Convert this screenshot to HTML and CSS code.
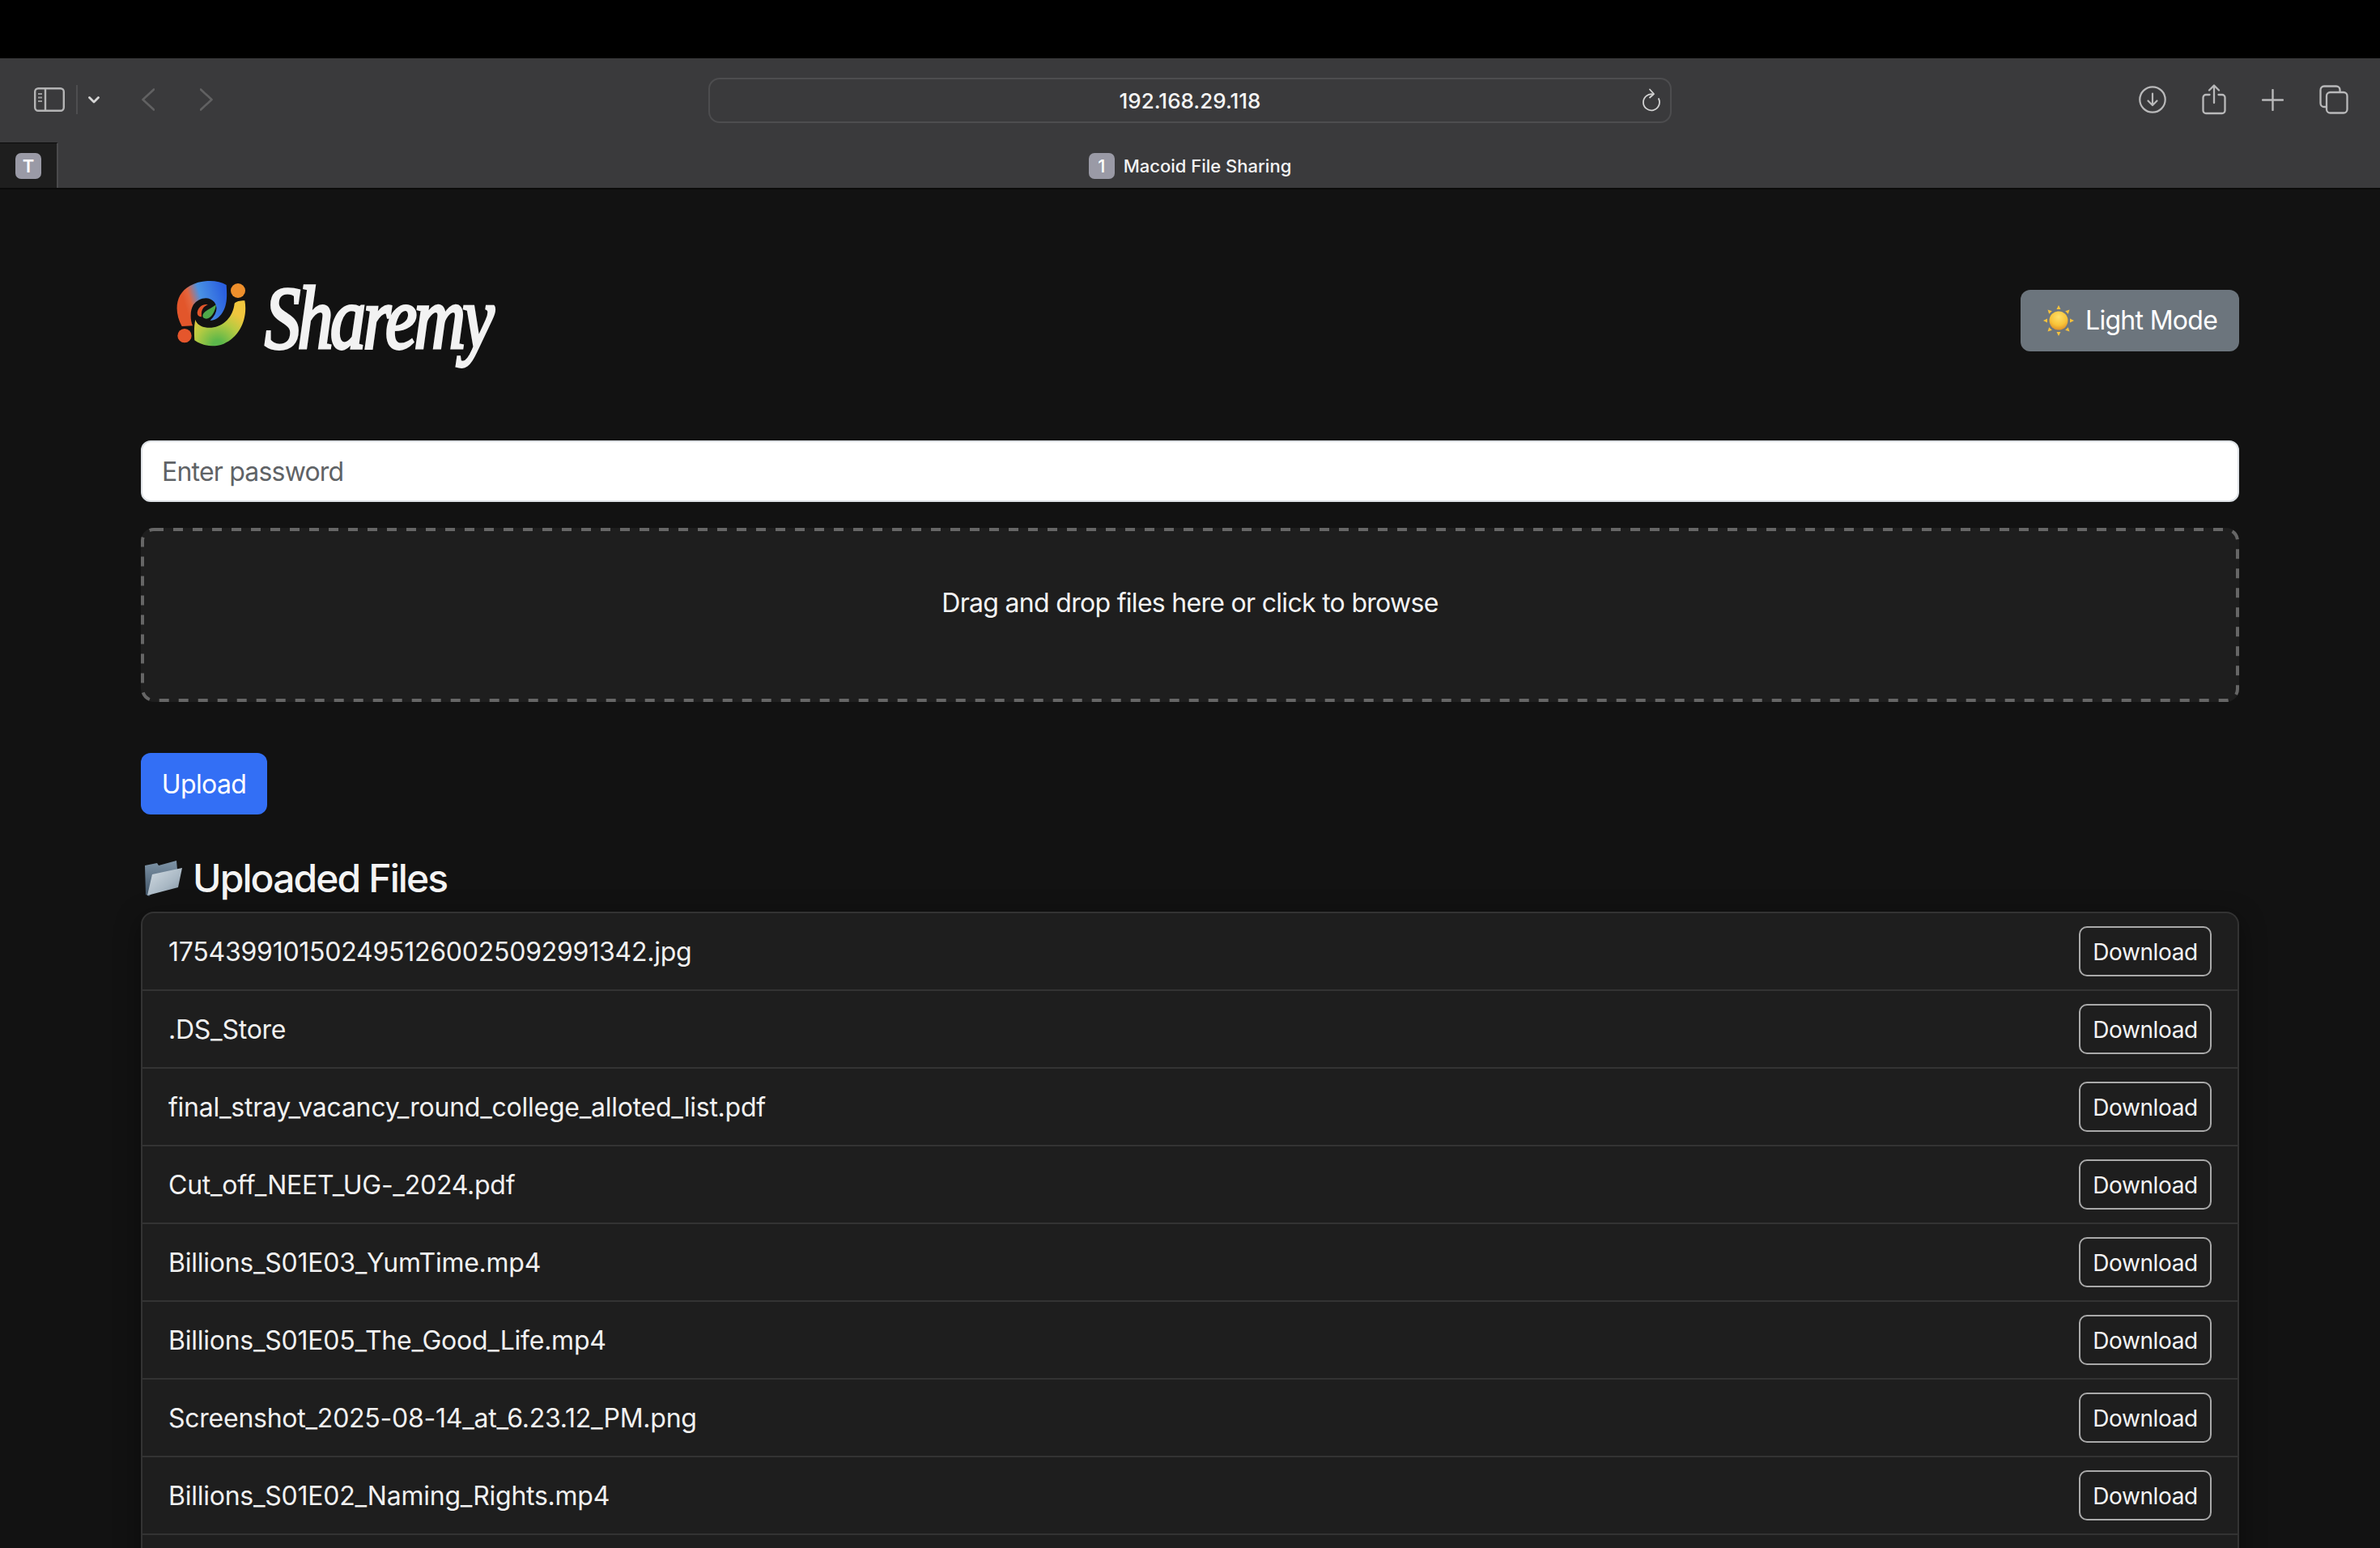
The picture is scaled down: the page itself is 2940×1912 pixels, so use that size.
FILE: index.html
```html
<!DOCTYPE html>
<html lang="en">
<head>
<meta charset="utf-8">
<title>Macoid File Sharing</title>
<link rel="stylesheet" href="styles.css">
</head>
<body>
<div class="notch-bar"></div>
<header class="browser">
  <div class="toolbar">
    <div class="tools tools-left">
      <svg class="ic-sidebar" width="38" height="30" viewBox="0 0 38 30" fill="none" stroke="#b4b4b5" stroke-width="2.4"><rect x="1.2" y="1.2" width="35.6" height="27.6" rx="4"/><path d="M14 1v28"/><path d="M5 8h5M5 12.500h5M5 17h5" stroke-width="2" stroke="#9a9a9b"/></svg>
      <span class="tool-sep"></span>
      <svg class="ic-chevron" width="14" height="9" viewBox="0 0 14 9" fill="none" stroke="#d6d6d6" stroke-width="2.800" stroke-linecap="round" stroke-linejoin="round"><path d="M1.500 1.500 7 7l5.500-5.500"/></svg>
      <svg class="ic-back" width="16" height="28" viewBox="0 0 16 28" fill="none" stroke="#616162" stroke-width="2.600" stroke-linecap="round" stroke-linejoin="round"><path d="M15 1.500 1.500 14 15 26.500"/></svg>
      <svg class="ic-forward" width="16" height="28" viewBox="0 0 16 28" fill="none" stroke="#616162" stroke-width="2.600" stroke-linecap="round" stroke-linejoin="round"><path d="M1 1.500 14.500 14 1 26.500"/></svg>
    </div>
    <div class="address">
      <span class="url">192.168.29.118</span>
      <svg class="ic-reload" width="22" height="30" viewBox="0 0 22 30" fill="none" stroke="#d2d2d2" stroke-width="1.800" stroke-linecap="round" stroke-linejoin="round"><path d="M13 7.500A10 10 0 1 0 20 13"/><path d="M9 1.500 14 7 9 11.500"/></svg>
    </div>
    <div class="tools tools-right">
      <svg width="34" height="34" viewBox="0 0 34 34" fill="none" stroke="#b9b9ba" stroke-width="2.200" stroke-linecap="round" stroke-linejoin="round"><circle cx="17" cy="17" r="15.700"/><path d="M17 9.500v14M11.500 18.500l5.500 5.500 5.500-5.500"/></svg>
      <svg width="30" height="38" viewBox="0 0 30 38" fill="none" stroke="#b9b9ba" stroke-width="2.300" stroke-linecap="round" stroke-linejoin="round"><path d="M9.500 13H5a3.500 3.500 0 0 0-3.500 3.500v16A3.500 3.500 0 0 0 5 36h20a3.500 3.500 0 0 0 3.500-3.500v-16A3.500 3.500 0 0 0 25 13h-4.500"/><path d="M15 23V2M9 7.500 15 1.500l6 6"/></svg>
      <svg width="27" height="27" viewBox="0 0 27 27" fill="none" stroke="#b9b9ba" stroke-width="2.400" stroke-linecap="round"><path d="M13.500 1v25M1 13.500h25"/></svg>
      <svg width="36" height="36" viewBox="0 0 36 36" fill="none" stroke="#b9b9ba" stroke-width="2.300"><path d="M8 27H6a4.500 4.500 0 0 1-4.500-4.500v-16A4.500 4.500 0 0 1 6 1.500h15A4.500 4.500 0 0 1 25.500 6v2"/><rect x="9" y="9" width="25.500" height="25.500" rx="4.500"/></svg>
    </div>
  </div>
  <div class="tabbar">
    <div class="pinned-tab"><span class="pinned-icon">T</span></div>
    <div class="active-tab"><span class="tab-badge">1</span><span class="tab-title">Macoid File Sharing</span></div>
  </div>
</header>
<main class="page">
  <div class="page-head">
    <div class="brand">
      <svg class="brand-mark" width="94" height="90" viewBox="100 70 282 270">
        <defs>
          <linearGradient id="gTop" gradientUnits="userSpaceOnUse" x1="130" y1="190" x2="300" y2="140">
            <stop offset="0.12" stop-color="#e2562b"/>
            <stop offset="0.25" stop-color="#e4663f"/>
            <stop offset="0.48" stop-color="#4a92e4"/>
            <stop offset="1" stop-color="#2a5fe0"/>
          </linearGradient>
          <radialGradient id="gBottom" gradientUnits="userSpaceOnUse" cx="268" cy="320" r="150">
            <stop offset="0.12" stop-color="#5cb74a"/>
            <stop offset="0.55" stop-color="#b5cb42"/>
            <stop offset="0.9" stop-color="#f0c63e"/>
          </radialGradient>
        </defs>
        <path fill="url(#gTop)" d="M135 250C105 195 110 130 165 100C205 78 265 75 300 97C302 130 305 170 285 200C272 220 255 230 240 228C265 205 270 180 255 160C235 135 195 145 178 170C165 190 165 225 175 248Z"/>
        <path fill="url(#gBottom)" d="M182 302C180 270 180 250 185 225C190 245 215 258 245 255C290 250 325 215 330 165C340 155 360 155 368 155C380 220 350 290 290 315C250 330 210 322 182 302Z"/>
        <path fill="#e2562b" d="M192 200C195 178 215 165 232 170C215 175 205 190 208 215C198 215 192 210 192 200Z"/>
        <path fill="#4fa84a" d="M212 212C212 195 235 190 262 170C258 195 245 222 225 222C218 222 212 218 212 212Z"/>
        <circle fill="#ee8f2c" cx="343" cy="118" r="27"/>
        <circle fill="#e5562c" cx="145" cy="285" r="26"/>
      </svg>
      <span class="wordmark">Sharemy</span>
    </div>
    <button class="btn-mode" type="button">
      <svg class="ic-sun" width="38" height="38" viewBox="0 0 38 38">
        <defs><radialGradient id="gSun" cx="50%" cy="30%" r="75%"><stop offset="0" stop-color="#ffe06a"/><stop offset="0.6" stop-color="#f8c338"/><stop offset="1" stop-color="#d9892a"/></radialGradient></defs>
        <g fill="#f7c23c"><path d="M19 0l2.500 5h-5z"/><path d="M19 38l-2.500-5h5z"/><path d="M0 19l5-2.500v5z"/><path d="M38 19l-5 2.500v-5z"/><path d="M5.500 5.500l5.300 1.700-3.600 3.600z"/><path d="M32.500 5.500l-1.700 5.300-3.600-3.600z"/><path d="M5.500 32.500l1.700-5.300 3.600 3.600z"/><path d="M32.500 32.500l-5.300-1.700 3.600-3.600z"/></g>
        <circle cx="19" cy="19" r="11.500" fill="url(#gSun)"/>
      </svg>
      <span>Light Mode</span>
    </button>
  </div>
  <input class="password" type="password" placeholder="Enter password">
  <div class="dropzone">
    <svg class="dash-frame" aria-hidden="true"><rect class="dash-rect" x="2" y="2" rx="14" ry="14"/></svg>
    <p class="drop-text">Drag and drop files here or click to browse</p>
  </div>
  <button class="btn-upload" type="button">Upload</button>
  <h2 class="files-title">
    <svg class="ic-folder" width="48" height="44" viewBox="0 0 48 44">
      <defs>
        <linearGradient id="gBack" x1="0" y1="0" x2="0" y2="1"><stop offset="0" stop-color="#7f95a8"/><stop offset="1" stop-color="#3f5366"/></linearGradient>
        <linearGradient id="gFront" x1="0" y1="0" x2="1" y2="1"><stop offset="0" stop-color="#d4dde4"/><stop offset="0.6" stop-color="#a9b8c4"/><stop offset="1" stop-color="#7e8f9e"/></linearGradient>
      </defs>
      <path fill="url(#gBack)" d="M1 6l15-3 2 3 22-6 1 11L6 44 2 42z"/>
      <path fill="url(#gFront)" d="M10 17L47 9 42 33 4 43z"/>
    </svg>
    <span>Uploaded Files</span>
  </h2>
  <ul class="file-list">
    <li class="file-row"><span class="file-name">17543991015024951260025092991342.jpg</span><a class="btn-download">Download</a></li>
    <li class="file-row"><span class="file-name">.DS_Store</span><a class="btn-download">Download</a></li>
    <li class="file-row"><span class="file-name">final_stray_vacancy_round_college_alloted_list.pdf</span><a class="btn-download">Download</a></li>
    <li class="file-row"><span class="file-name">Cut_off_NEET_UG-_2024.pdf</span><a class="btn-download">Download</a></li>
    <li class="file-row"><span class="file-name">Billions_S01E03_YumTime.mp4</span><a class="btn-download">Download</a></li>
    <li class="file-row"><span class="file-name">Billions_S01E05_The_Good_Life.mp4</span><a class="btn-download">Download</a></li>
    <li class="file-row"><span class="file-name">Screenshot_2025-08-14_at_6.23.12_PM.png</span><a class="btn-download">Download</a></li>
    <li class="file-row"><span class="file-name">Billions_S01E02_Naming_Rights.mp4</span><a class="btn-download">Download</a></li>
    <li class="file-row"></li>
  </ul>
</main>
</body>
</html>
```
FILE: styles.css
```css
* { box-sizing: border-box; }
html, body { margin: 0; height: 100%; overflow: hidden; }
body { background: #121212; color: #f1f1f1; font-family: Inter, "Liberation Sans", sans-serif; font-size: 32px; line-height: 48px; }

.notch-bar { height: 72px; background: #000; }
.browser { height: 162px; background: #3a3a3c; border-bottom: 2px solid #0b0b0b; display: flex; flex-direction: column; }
.toolbar { height: 104px; display: grid; grid-template-columns: 875px 1190px 1fr; align-items: center; }
.tools { display: flex; align-items: center; margin-top: -2px; }
.tools-left { padding-left: 42px; }
.tool-sep { width: 2px; height: 36px; background: #4e4e50; margin-left: 14px; }
.ic-chevron { margin-left: 13px; }
.ic-back { margin-left: 52px; }
.ic-forward { margin-left: 56px; }
.tools-right { justify-content: flex-end; padding-right: 39px; gap: 44px; }
.address { height: 56px; border: 2px solid #4d4d4f; border-radius: 14px; display: flex; align-items: center; justify-content: center; position: relative; }
.url { font-size: 26px; font-weight: 500; color: #f4f4f4; line-height: 30px; padding-top: 1px; }
.ic-reload { position: absolute; right: 12px; top: 11px; }
.tabbar { height: 56px; position: relative; display: flex; justify-content: center; align-items: center; padding-top: 2px; }
.pinned-tab { position: absolute; left: 0; top: 0; width: 72px; height: 56px; background: #1e1e1e; border-top: 1px solid #0b0b0b; border-right: 2px solid #4a4a4c; display: flex; align-items: center; padding-left: 19px; }
.pinned-icon { width: 32px; height: 32px; border-radius: 7px; background: #9a9aa6; color: #fff; font-size: 22px; font-weight: 600; line-height: 32px; text-align: center; }
.active-tab { display: flex; align-items: center; gap: 11px; }
.tab-badge { width: 32px; height: 32px; border-radius: 7px; background: #9a9aa6; color: #fff; font-size: 22px; font-weight: 500; line-height: 32px; text-align: center; }
.tab-title { font-size: 22px; font-weight: 500; color: #f4f4f4; line-height: 30px; }

.page { padding: 0 174px; }
.page-head { height: 310px; display: flex; justify-content: space-between; align-items: flex-start; padding-top: 109px; }
.brand { display: flex; align-items: flex-start; padding-left: 39px; height: 120px; gap: 20px; }
.brand-mark { flex: none; }
.wordmark { font-family: "Liberation Serif", serif; font-style: italic; font-weight: 400; font-size: 88px; line-height: 92px; letter-spacing: -3.500px; color: #f2f2f2; -webkit-text-stroke: 3px #f2f2f2; transform: scale(1, 1.25); transform-origin: 0 30%; }
.btn-mode { width: 270px; height: 76px; margin-top: 15px; border: 0; border-radius: 12px; background: #6c757d; color: #fff; font: inherit; letter-spacing: -0.7px; display: flex; align-items: center; gap: 14px; padding: 0 0 0 28px; white-space: nowrap; }
.ic-sun { flex: none; width: 38px; height: 38px; }
.password { display: block; width: 100%; height: 76px; border: 2px solid #dee2e6; border-radius: 12px; background: #fff; padding: 0 24px; font: inherit; letter-spacing: -0.8px; color: #212529; }
.password::placeholder { color: #5f6366; opacity: 1; }
.dropzone { height: 215px; margin-top: 32px; border-radius: 16px; background: #1e1e1e; padding-top: 69px; text-align: center; position: relative; }
.dash-frame { position: absolute; inset: 0; width: 100%; height: 100%; }
.dash-rect { width: calc(100% - 4px); height: calc(100% - 4px); fill: none; stroke: #666; stroke-width: 4px; stroke-dasharray: 12 12; }
.drop-text { margin: 0; color: #f4f4f4; letter-spacing: -0.7px; }
.btn-upload { display: block; width: 156px; height: 76px; margin-top: 63px; padding: 2px 0 0; border: 0; border-radius: 12px; background: #336ff5; color: #fff; font: inherit; letter-spacing: -0.6px; }
.files-title { margin: 48px 0 0; height: 72px; padding-bottom: 10px; display: flex; align-items: center; gap: 12px; font-size: 48px; line-height: 58px; font-weight: 500; letter-spacing: -1.9px; color: #f4f4f4; }
.ic-folder { flex: none; margin-top: 0; margin-left: 4px; }
.file-list { list-style: none; margin: 0; padding: 0; border: 2px solid #333; border-bottom: 0; border-radius: 16px 16px 0 0; background: #1e1e1e; box-shadow: 0 8px 32px rgba(0,0,0,.4); }
.file-row { height: 96px; padding: 0 32px; border-bottom: 2px solid #333; display: flex; justify-content: space-between; align-items: center; }
.file-name { color: #f1f1f1; letter-spacing: -0.25px; padding-top: 2px; }
.btn-download { width: 164px; height: 62px; padding-top: 1px; border: 2px solid #a9a9a9; border-radius: 10px; display: flex; align-items: center; justify-content: center; font-size: 28px; line-height: 42px; letter-spacing: -0.4px; color: #f4f4f4; }
```
